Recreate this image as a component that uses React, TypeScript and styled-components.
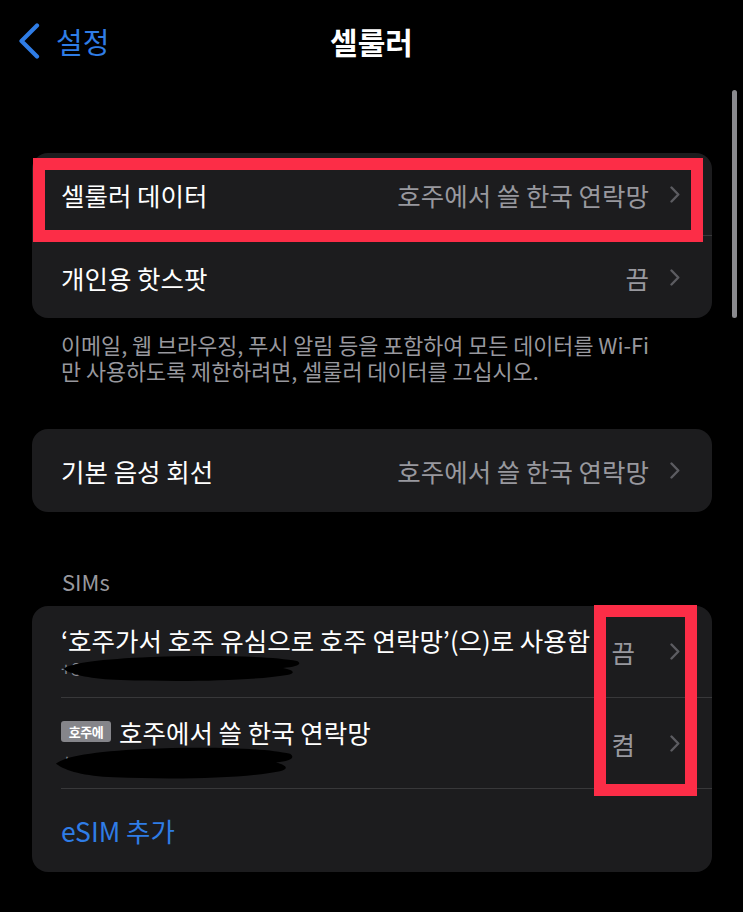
import { FunctionComponent } from "react";
import styled, { createGlobalStyle } from "styled-components";

const GlobalStyle = createGlobalStyle`
	html, body {
		margin: 0;
		padding: 0;
		background: #000;
	}
	body {
		font-family: "Noto Sans CJK KR", "Noto Sans", "Liberation Sans", sans-serif;
		-webkit-font-smoothing: antialiased;
	}
`;

const Screen = styled.div`
	position: relative;
	width: 743px;
	height: 912px;
	overflow: hidden;
	background: #000;
	color: #fff;
`;

const NavBar = styled.div`
	height: 84px;
	display: grid;
	grid-template-columns: 1fr auto 1fr;
	align-items: center;
	padding: 0 18px;
	box-sizing: border-box;
`;

const BackButton = styled.div`
	display: flex;
	align-items: center;
	gap: 16px;
	color: #2f7de6;
	font-size: 29px;
	margin-top: -2px;
`;

const Title = styled.div`
	font-size: 30px;
	font-weight: 600;
	margin-top: -2px;
`;

const ScrollThumb = styled.div`
	position: absolute;
	top: 90px;
	right: 6px;
	width: 5px;
	height: 228px;
	border-radius: 3px;
	background: #8a8a8e;
`;

const Content = styled.div`
	padding: 69px 31px 0 32px;
`;

const Card = styled.div<{ $gap?: number }>`
	position: relative;
	background: #1c1c1e;
	border-radius: 16px;
	margin-top: ${(p) => p.$gap ?? 0}px;
`;

const Row = styled.div<{ $h?: number }>`
	display: flex;
	align-items: center;
	height: ${(p) => p.$h ?? 82}px;
	padding: 0 32px 0 29px;
	font-size: 25.5px;
`;

const Label = styled.div`
	flex: 1;
	min-width: 0;
	white-space: nowrap;
	overflow: hidden;
`;

const Value = styled.div<{ $gap?: number }>`
	color: #98989e;
	white-space: nowrap;
	margin-right: ${(p) => p.$gap ?? 21}px;
`;

const Separator = styled.div`
	height: 1px;
	margin-left: 29px;
	background: #38383a;
`;

const Footer = styled.div`
	margin: 14px 0 0 29px;
	font-size: 21.8px;
	line-height: 26px;
	color: #98989e;
`;

const SectionHeader = styled.div`
	margin: 56px 0 12px 30px;
	font-size: 22px;
	line-height: 26px;
	color: #98989e;
`;

const SimInfo = styled.div`
	flex: 1;
	min-width: 0;
	display: flex;
	flex-direction: column;
	align-self: stretch;
	padding-top: 16px;
`;

const SimTitle = styled.div`
	display: flex;
	align-items: center;
	gap: 8px;
	height: 34px;
	white-space: nowrap;
	overflow: hidden;
`;

const Badge = styled.span`
	display: inline-flex;
	align-items: center;
	justify-content: center;
	flex: none;
	width: 50px;
	height: 21px;
	border-radius: 3px;
	background: #85858a;
	color: #fff;
	font-size: 13px;
	font-weight: 600;
	letter-spacing: -0.5px;
`;

const Redacted = styled.div<{ $offset: number; $h: number }>`
	position: relative;
	height: ${(p) => p.$h}px;
	margin-left: ${(p) => p.$offset}px;
	color: #8d8d92;
	font-size: 18px;
	line-height: 24px;
`;

const Link = styled.div`
	color: #2f7de6;
	font-size: 26.5px;
`;

const Highlight = styled.div<{ $x: number; $y: number; $w: number; $h: number }>`
	position: absolute;
	left: ${(p) => p.$x}px;
	top: ${(p) => p.$y}px;
	width: ${(p) => p.$w}px;
	height: ${(p) => p.$h}px;
	border: 12px solid #fc2d47;
	box-sizing: border-box;
	pointer-events: none;
`;

const Chevron: FunctionComponent = () => (
	<svg width="10" height="17" viewBox="0 0 10 17" fill="none">
		<path d="M1.5 1.5 L8.3 8.5 L1.5 15.5" stroke="#5c5c61" strokeWidth="2.4" strokeLinecap="round" strokeLinejoin="round" />
	</svg>
);

const BackChevron: FunctionComponent = () => (
	<svg width="22" height="36" viewBox="0 0 22 36" fill="none">
		<path d="M19 2.5 L3.5 18 L19 33.5" stroke="#2f7de6" strokeWidth="4.2" strokeLinecap="round" strokeLinejoin="round" />
	</svg>
);

const Blob: FunctionComponent<{ w: number; h: number; top: number }> = ({ w, h, top }) => (
	<svg width={w} height={h} viewBox="0 0 240 30" preserveAspectRatio="none" style={{ position: "absolute", left: 0, top }}>
		<path
			d="M2 16 C 10 10, 40 6, 90 4 C 150 2, 210 3, 236 8 C 242 11, 236 14, 222 15 C 232 17, 236 20, 226 22 C 190 28, 120 29, 60 27 C 30 26, 12 22, 2 16 Z"
			fill="#000"
		/>
	</svg>
);

type NavRow = { label: string; value: string };

const cellularRows: NavRow[] = [
	{ label: "셀룰러 데이터", value: "호주에서 쓸 한국 연락망" },
	{ label: "개인용 핫스팟", value: "끔" }
];

const App: FunctionComponent = () => {
	return (
		<Screen>
			<GlobalStyle />
			<NavBar>
				<BackButton>
					<BackChevron />
					<span>설정</span>
				</BackButton>
				<Title>셀룰러</Title>
				<div />
			</NavBar>
			<ScrollThumb />

			<Content>
				<Card>
					{cellularRows.map((r, i) => (
						<div key={r.label}>
							{i > 0 && <Separator />}
							<Row>
								<Label>{r.label}</Label>
								<Value>{r.value}</Value>
								<Chevron />
							</Row>
						</div>
					))}
					<Highlight $x={1} $y={5} $w={670} $h={84} />
				</Card>

				<Footer>
					이메일, 웹 브라우징, 푸시 알림 등을 포함하여 모든 데이터를 Wi-Fi
					<br />
					만 사용하도록 제한하려면, 셀룰러 데이터를 끄십시오.
				</Footer>

				<Card $gap={45}>
					<Row $h={83}>
						<Label>기본 음성 회선</Label>
						<Value>호주에서 쓸 한국 연락망</Value>
						<Chevron />
					</Row>
				</Card>

				<SectionHeader>SIMs</SectionHeader>

				<Card>
					<Row $h={91}>
						<SimInfo>
							<SimTitle>‘호주가서 호주 유심으로 호주 연락망’(으)로 사용함</SimTitle>
							<Redacted $offset={0} $h={36}>
								<span>+8</span>
								<Blob w={240} h={30} top={-3} />
							</Redacted>
						</SimInfo>
						<Value $gap={35}>끔</Value>
						<Chevron />
					</Row>
					<Separator />
					<Row $h={90}>
						<SimInfo>
							<SimTitle>
								<Badge>호주에</Badge>
								<span>호주에서 쓸 한국 연락망</span>
							</SimTitle>
							<Redacted $offset={-7} $h={36}>
								<span style={{ marginLeft: 8 }}>+</span>
								<Blob w={240} h={37} top={-4} />
							</Redacted>
						</SimInfo>
						<Value $gap={35}>켬</Value>
						<Chevron />
					</Row>
					<Separator />
					<Row $h={83}>
						<Link>eSIM 추가</Link>
					</Row>
					<Highlight $x={562} $y={-1} $w={103} $h={191} />
				</Card>
			</Content>
		</Screen>
	);
};

export default App;
